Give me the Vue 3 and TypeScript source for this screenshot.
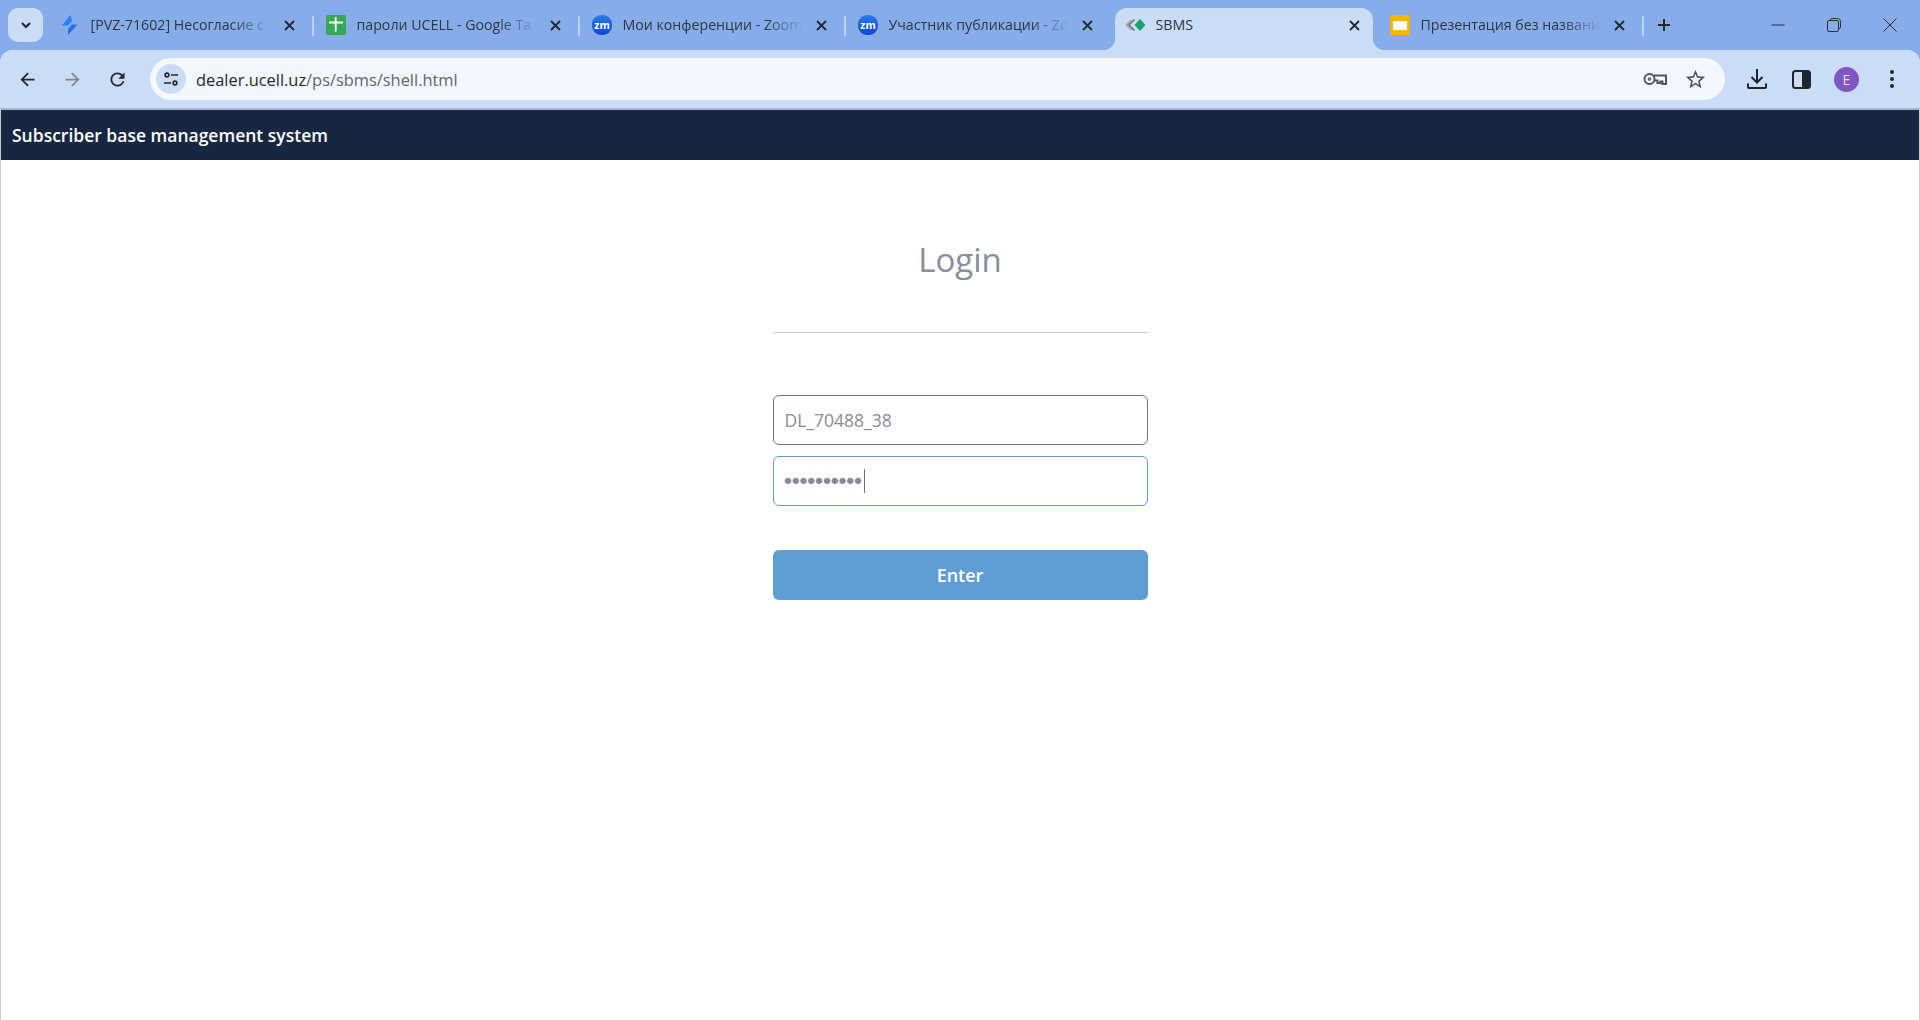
<script setup lang="ts">
interface Tab {
  title: string
  icon: 'bolt' | 'sheet' | 'zoom' | 'sbms' | 'slides'
  active?: boolean
  sep?: boolean
}
const tabs: Tab[] = [
  { title: '[PVZ-71602] Несогласие с', icon: 'bolt', sep: true },
  { title: 'пароли UCELL - Google Та', icon: 'sheet', sep: true },
  { title: 'Мои конференции - Zoom', icon: 'zoom', sep: true },
  { title: 'Участник публикации - Zo', icon: 'zoom' },
  { title: 'SBMS', icon: 'sbms', active: true },
  { title: 'Презентация без названи', icon: 'slides', sep: true }
]
</script>

<template>
  <div class="window">
    <div class="strip">
      <button class="tablist" aria-label="Tabs">
        <svg width="14" height="14" viewBox="0 0 14 14"><path d="M3 5l4 4 4-4" fill="none" stroke="#1f2430" stroke-width="2" /></svg>
      </button>
      <div class="tabs">
        <div v-for="tab in tabs" :key="tab.title" class="tab" :class="{ active: tab.active, sep: tab.sep }">
          <svg v-if="tab.icon === 'bolt'" class="fav" viewBox="0 0 20 20">
            <path d="M10.500 0L2 10.500h6L12 6z" fill="#2b7ff6" />
            <path d="M17.500 9.500H12L8 14v6z" fill="#2470e4" />
          </svg>
          <svg v-else-if="tab.icon === 'sheet'" class="fav" viewBox="0 0 20 20">
            <rect width="20" height="20" rx="2" fill="#34a853" />
            <path d="M3 7.500h14M9.700 2v14.500" stroke="#fff" stroke-width="1.800" fill="none" />
          </svg>
          <svg v-else-if="tab.icon === 'zoom'" class="fav" viewBox="0 0 20 20">
            <defs>
              <linearGradient id="zmg" x1="0" y1="0" x2="0" y2="1"><stop offset="0" stop-color="#2a7af0" /><stop offset="1" stop-color="#0b46cf" /></linearGradient>
            </defs>
            <rect width="20" height="20" rx="9" fill="url(#zmg)" />
            <text x="10" y="13.500" text-anchor="middle" class="zm">zm</text>
          </svg>
          <svg v-else-if="tab.icon === 'sbms'" class="fav" viewBox="0 0 20 20">
            <path d="M5 5.500L0.500 10 5 14.500" fill="none" stroke="#c2c4c8" stroke-width="1.200" />
            <path d="M7 4.800L1.800 10 7 15.200" fill="none" stroke="#9a9ca2" stroke-width="1.200" />
            <path d="M9.500 4.500L4 10l5.500 5.500" fill="none" stroke="#6f7278" stroke-width="1.500" />
            <path d="M15 4l5.500 6-5.500 6-5.500-6z" fill="#0fa56b" />
          </svg>
          <svg v-else class="fav" viewBox="0 0 20 20">
            <rect width="20" height="20" rx="2" fill="#f6b40b" />
            <rect x="3" y="6" width="14" height="9" fill="#fff" />
          </svg>
          <span class="tab-title" :class="{ plain: tab.active }">{{ tab.title }}</span>
          <svg class="x" viewBox="0 0 11 11"><path d="M1 1l9 9M10 1l-9 9" stroke="#23272f" stroke-width="1.800" fill="none" /></svg>
        </div>
      </div>
      <svg class="plus" viewBox="0 0 14 14"><path d="M7 1v12M1 7h12" stroke="#23272f" stroke-width="2" fill="none" /></svg>
      <div class="controls">
        <svg width="14" height="14" viewBox="0 0 14 14"><path d="M0.500 7h13" stroke="#2a2e36" stroke-width="1" /></svg>
        <svg width="14" height="14" viewBox="0 0 14 14"><path d="M3.500 2.500V2A1.500 1.500 0 0 1 5 .5h5.500A3 3 0 0 1 13.500 3.500V9a1.500 1.500 0 0 1-1.500 1.500h-.5" fill="none" stroke="#2a2e36" /><rect x="0.500" y="2.500" width="11" height="11" rx="1.500" fill="none" stroke="#2a2e36" /></svg>
        <svg width="14" height="14" viewBox="0 0 14 14"><path d="M0.500 0.500l13 13M13.500 0.500l-13 13" stroke="#2a2e36" stroke-width="1" fill="none" /></svg>
      </div>
    </div>

    <div class="toolbar">
      <button class="tool"><svg width="21" height="21" viewBox="0 0 24 24"><path d="M20 11H7.830l5.590-5.590L12 4l-8 8 8 8 1.410-1.410L7.830 13H20v-2z" fill="#23272f" /></svg></button>
      <button class="tool"><svg width="21" height="21" viewBox="0 0 24 24"><path d="M12 4l-1.410 1.410L16.170 11H4v2h12.170l-5.580 5.590L12 20l8-8z" fill="#7f8794" /></svg></button>
      <button class="tool"><svg width="21" height="21" viewBox="0 0 24 24"><path d="M17.650 6.350C16.200 4.900 14.210 4 12 4c-4.420 0-7.990 3.580-7.990 8s3.570 8 7.990 8c3.730 0 6.840-2.550 7.730-6h-2.080c-.82 2.330-3.040 4-5.650 4-3.310 0-6-2.690-6-6s2.690-6 6-6c1.660 0 3.140.69 4.220 1.780L13 11h7V4l-2.350 2.350z" fill="#23272f" /></svg></button>
      <div class="omnibox">
        <span class="site-info">
          <svg width="18" height="18" viewBox="0 0 18 18" fill="none" stroke="#23272f" stroke-width="1.600">
            <circle cx="5" cy="5" r="1.900" />
            <path d="M9 5h7M2 13h7" />
            <circle cx="13" cy="13" r="1.900" />
          </svg>
        </span>
        <span class="url"><span class="host">dealer.ucell.uz</span>/ps/sbms/shell.html</span>
        <span class="omni-icons">
          <svg width="24" height="14" viewBox="0 0 24 14" fill="none" stroke="#50555f" stroke-width="2">
            <circle cx="6.500" cy="7" r="5" />
            <circle cx="6.500" cy="7" r="1.200" stroke-width="1.200" />
            <path d="M11 3.500h12v8.500h-3.500v-2.500h-2v1.500h-3v-2.500h-3.500" />
          </svg>
          <svg width="23" height="23" viewBox="0 0 24 24"><path d="M22 9.240l-7.190-.62L12 2 9.190 8.630 2 9.240l5.460 4.730L5.820 21 12 17.270 18.180 21l-1.630-7.030L22 9.240zM12 15.400l-3.760 2.270 1-4.280-3.320-2.880 4.380-.38L12 6.100l1.710 4.040 4.380.38-3.320 2.880 1 4.280L12 15.400z" fill="#4a4f59" /></svg>
        </span>
      </div>
      <div class="tools-right">
        <button class="tool"><svg width="22" height="22" viewBox="0 0 22 22" fill="none" stroke="#1f2430" stroke-width="2"><path d="M11 1v13.500M5.500 9l5.500 5.500L16.500 9M2 15.500V19a1 1 0 0 0 1 1h16a1 1 0 0 0 1-1v-3.500" /></svg></button>
        <button class="tool"><svg width="19" height="19" viewBox="0 0 19 19"><rect x="1" y="1" width="17" height="17" rx="2.500" fill="none" stroke="#1f2430" stroke-width="2" /><path d="M10 1h5.500A2.500 2.500 0 0 1 18 3.500v12a2.500 2.500 0 0 1-2.500 2.500H10z" fill="#1f2430" /></svg></button>
        <button class="tool"><span class="avatar">E</span></button>
        <button class="tool"><svg width="6" height="20" viewBox="0 0 6 20"><circle cx="3" cy="3" r="2" fill="#23272f" /><circle cx="3" cy="10" r="2" fill="#23272f" /><circle cx="3" cy="17" r="2" fill="#23272f" /></svg></button>
      </div>
    </div>

    <div class="site">
      <header class="site-head">Subscriber base management system</header>
      <main class="site-main">
        <form class="login" @submit.prevent>
          <h1 class="login-title">Login</h1>
          <hr class="rule" />
          <input class="field" type="text" value="DL_70488_38" readonly />
          <div class="pass-wrap">
            <input class="field focus" type="password" value="1234567890" readonly />
            <span class="caret"></span>
          </div>
          <button class="enter" type="button">Enter</button>
        </form>
      </main>
    </div>
  </div>
</template>

<style>
html, body { margin: 0; background: #fff; }
</style>

<style scoped>
.window {
  width: 1920px;
  height: 1020px;
  overflow: hidden;
  display: flex;
  flex-direction: column;
  background: #86adea;
  font-family: "Open Sans", "Noto Sans", sans-serif;
}
button { border: 0; background: none; padding: 0; font: inherit; }

.strip { height: 50px; flex: none; display: flex; align-items: flex-end; padding-left: 8px; box-sizing: border-box; }
.tablist {
  width: 35px; height: 34px; margin-bottom: 8px; border-radius: 10px;
  background: #cbdcf6; display: flex; align-items: center; justify-content: center;
}
.tabs { display: flex; margin-left: 8px; height: 42.500px; }
.tab {
  position: relative; width: 258px; margin-right: 8px; box-sizing: border-box;
  padding: 0 14px 7px 9px; display: flex; align-items: center;
  border-radius: 12px 12px 0 0;
}
.tab.active { background: #cbdcf6; padding-left: 10px; }
.tab.active::before, .tab.active::after {
  content: ""; position: absolute; bottom: 0; width: 12px; height: 12px;
}
.tab.active::before { left: -12px; background: radial-gradient(circle at 0 0, transparent 12px, #cbdcf6 12.500px); }
.tab.active::after { right: -12px; background: radial-gradient(circle at 100% 0, transparent 12px, #cbdcf6 12.500px); }
.tab.sep::after {
  content: ""; position: absolute; right: -5px; top: 8px; width: 2.500px; height: 20px;
  background: #bcd1f3; border-radius: 1px;
}
.fav { width: 20px; height: 20px; flex: none; }
.zm { font: 700 10.500px "Open Sans", sans-serif; fill: #fff; }
.tab-title {
  margin-left: 10.500px; width: 186px; flex: none; overflow: hidden; white-space: nowrap;
  font-size: 14.200px; line-height: 20px; color: #2f3542;
  -webkit-mask-image: linear-gradient(to right, #000 76%, transparent 97%);
  mask-image: linear-gradient(to right, #000 76%, transparent 97%);
}
.tab-title.plain { -webkit-mask-image: none; mask-image: none; }
.x { width: 11px; height: 11px; flex: none; margin-left: 7px; }
.plus { width: 14px; height: 14px; margin: 0 0 18px 10px; flex: none; }
.controls {
  margin-left: auto; display: flex; gap: 42px; align-items: center;
  height: 50px; padding-right: 23px; box-sizing: border-box;
}

.toolbar {
  height: 58px; flex: none; display: flex; align-items: center; background: #cbdcf6;
  border-radius: 12px 12px 0 0; padding: 0 6px 0 5px; box-sizing: border-box;
}
.tool { width: 45px; height: 42px; display: flex; align-items: center; justify-content: center; flex: none; }
.omnibox {
  margin-left: 10px; width: 1575px; height: 42px; box-sizing: border-box;
  background: #f4f7fc; border-radius: 21px; display: flex; align-items: center; padding: 0 18px 0 6px;
}
.site-info {
  width: 30px; height: 30px; border-radius: 50%; background: #cbdcf6;
  display: flex; align-items: center; justify-content: center; flex: none;
}
.url { margin-left: 10px; font-size: 16.400px; color: #60656e; white-space: nowrap; }
.host { color: #23272f; }
.omni-icons { margin-left: auto; display: flex; align-items: center; gap: 17px; }
.tools-right { margin-left: auto; display: flex; align-items: center; }
.avatar {
  width: 25px; height: 25px; border-radius: 50%; background: #7e57c2; color: #e6dcf6;
  font-size: 14px; font-weight: 400; display: flex; align-items: center; justify-content: center;
}

.site {
  flex: 1; display: flex; flex-direction: column; background: #fff;
  border-top: 2px solid #a8b4c8; border-left: 1px solid #c9ccd2; border-right: 1px solid #c9ccd2;
}
.site-head {
  height: 50px; flex: none; background: #172741; color: #fff; display: flex; align-items: center;
  padding-left: 11px; font-size: 17.500px; font-weight: 600;
}
.site-main { display: flex; justify-content: center; }
.login { width: 375px; display: flex; flex-direction: column; }
.login-title {
  margin: 0; padding-top: 78px; height: 44px; line-height: 44px; text-align: center;
  font-size: 33px; font-weight: 400; color: #8a8d9a; box-sizing: content-box;
}
.rule { margin: 50px 0 0; border: 0; height: 1px; background: #c9ccd8; }
.field {
  display: block; width: 100%; height: 50px; box-sizing: border-box; margin: 0; outline: none;
  border: 1.500px solid #6b7488; border-radius: 6px; padding: 0 11px; background: #fff;
  font: 400 17.500px "Open Sans", sans-serif; color: #8a8a95;
}
.login > .field { margin-top: 62px; }
.pass-wrap { position: relative; margin-top: 11px; }
.field.focus {
  border-color: #5e9cd3; font: 400 22px "DejaVu Sans", sans-serif; letter-spacing: -5.200px;
  padding-left: 8px;
}
.caret { position: absolute; left: 91px; top: 13px; width: 1px; height: 24px; background: #6b7488; }
.enter {
  margin-top: 44px; height: 50px; border-radius: 6px; background: #5e9cd3; color: #fff;
  font-size: 18px; font-weight: 600; text-align: center;
}
</style>
